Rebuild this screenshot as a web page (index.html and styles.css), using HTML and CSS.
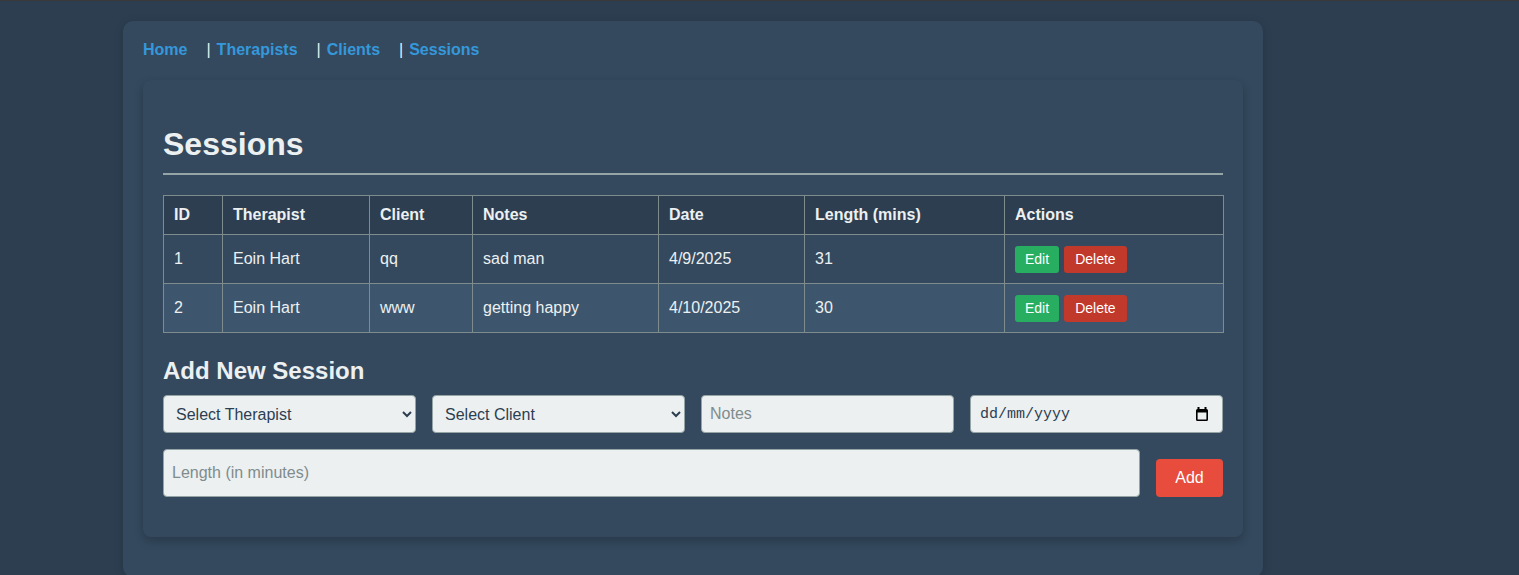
FILE: index.html
```html
<!DOCTYPE html>
<html lang="en">
<head>
<meta charset="utf-8">
<title>Sessions</title>
<link rel="stylesheet" href="styles.css">
</head>
<body>
<div class="container">
  <nav class="nav">
    <a href="#">Home</a><span class="sep">|</span><a href="#">Therapists</a><span class="sep">|</span><a href="#">Clients</a><span class="sep">|</span><a href="#">Sessions</a>
  </nav>
  <section class="card">
    <h2 class="title">Sessions</h2>
    <table class="table">
      <thead>
        <tr>
          <th class="c-id">ID</th>
          <th class="c-ther">Therapist</th>
          <th class="c-client">Client</th>
          <th class="c-notes">Notes</th>
          <th class="c-date">Date</th>
          <th class="c-len">Length (mins)</th>
          <th class="c-act">Actions</th>
        </tr>
      </thead>
      <tbody>
        <tr>
          <td>1</td><td>Eoin Hart</td><td>qq</td><td>sad man</td><td>4/9/2025</td><td>31</td>
          <td><button class="btn edit">Edit</button><button class="btn delete">Delete</button></td>
        </tr>
        <tr class="alt">
          <td>2</td><td>Eoin Hart</td><td>www</td><td>getting happy</td><td>4/10/2025</td><td>30</td>
          <td><button class="btn edit">Edit</button><button class="btn delete">Delete</button></td>
        </tr>
      </tbody>
    </table>
    <h3 class="subtitle">Add New Session</h3>
    <form class="form">
      <div class="row">
        <select class="field"><option>Select Therapist</option></select>
        <select class="field"><option>Select Client</option></select>
        <input class="field" type="text" placeholder="Notes">
        <label class="field date">
          <input class="date-input" type="text" placeholder="dd/mm/yyyy">
          <svg class="cal" width="14" height="14" viewBox="0 0 14 14" aria-hidden="true">
            <rect x="2.5" y="0" width="2" height="3" fill="#000"/>
            <rect x="9.5" y="0" width="2" height="3" fill="#000"/>
            <path d="M1 3.5 Q1 2 2.5 2 H11.5 Q13 2 13 3.5 V12.5 Q13 14 11.5 14 H2.5 Q1 14 1 12.5 Z M2.6 5.6 V12.4 H11.4 V5.6 Z" fill="#000" fill-rule="evenodd"/>
          </svg>
        </label>
      </div>
      <div class="row bottom">
        <input class="field length" type="number" placeholder="Length (in minutes)">
        <button type="button" class="add">Add</button>
      </div>
    </form>
  </section>
</div>
</body>
</html>
```
FILE: styles.css
```css
html, body {
  margin: 0;
  padding: 0;
}
body {
  background: #2c3e50;
  border-top: 1px solid #3a3a3a;
  font-family: "Liberation Sans", Arial, sans-serif;
  color: #ecf0f1;
  overflow: hidden;
  height: 574px;
}
.container {
  width: 1100px;
  margin: 20px 0 0 123px;
  padding: 20px 20px 20px;
  background: #34495e;
  border-radius: 10px;
  box-shadow: 0 2px 10px rgba(0,0,0,0.15);
}
.nav {
  display: flex;
  align-items: baseline;
  font-size: 16px;
  line-height: 18px;
  height: 18px;
}
.nav a {
  color: #3498db;
  font-weight: bold;
  text-decoration: none;
  margin-right: 19px;
}
.nav .sep {
  color: #ecf0f1;
  margin-right: 6px;
}
.card {
  margin-top: 21px;
  margin-bottom: 20px;
  background: #34495e;
  border-radius: 8px;
  padding: 20px;
  box-shadow: 0 4px 10px rgba(0,0,0,0.22);
}
.title {
  font-size: 32px;
  margin: 26px 0 20px;
  padding-bottom: 10px;
  border-bottom: 2px solid #95a5a6;
  line-height: 37px;
}
.table {
  width: 1060px;
  border-collapse: collapse;
  table-layout: fixed;
  font-size: 16px;
}
.table th, .table td {
  box-sizing: border-box;
  border: 1px solid #7f8c8d;
  padding: 10px;
  text-align: left;
  vertical-align: middle;
  line-height: 18px;
}
.table th {
  background: #2c3e50;
  font-weight: bold;
}
.table td {
  height: 49px;
  background: #34495e;
}
.table tr.alt td {
  background: #3d566e;
}
.c-id { width: 59px; }
.c-ther { width: 147px; }
.c-client { width: 103px; }
.c-notes { width: 186px; }
.c-date { width: 146px; }
.c-len { width: 200px; }
.c-act { width: 219px; }
.btn {
  font-family: "Liberation Sans", Arial, sans-serif;
  font-size: 14px;
  line-height: 17px;
  color: #fff;
  border: none;
  border-radius: 3px;
  padding: 5px 10px;
  margin-right: 5px;
  vertical-align: middle;
}
.btn.edit { background: #27ae60; }
.btn.delete { background: #c0392b; padding: 5px 11px; }
.subtitle {
  font-size: 24px;
  margin: 24px 0 11px;
  line-height: 27px;
}
.form {
  display: flex;
  flex-direction: column;
  gap: 16px;
  margin-bottom: 20px;
}
.row {
  display: flex;
  gap: 16px;
}
.row.bottom {
  align-items: flex-end;
}
.field {
  flex: 1 1 0;
  min-width: 0;
  height: 38px;
  box-sizing: border-box;
  background: #ecf0f1;
  border: 1px solid #95a5a6;
  border-radius: 4px;
  padding: 8px;
  font-family: "Liberation Sans", Arial, sans-serif;
  font-size: 16px;
  color: #2c3e50;
}
.field::placeholder {
  color: #7f8c8d;
}
.field.date {
  display: flex;
  align-items: center;
  padding: 0 8px;
}
.date-input {
  flex: 1;
  min-width: 0;
  width: 0;
  margin-left: 1px;
  border: none;
  background: transparent;
  padding: 0;
  outline: none;
  font-family: "Liberation Mono", "DejaVu Sans Mono", monospace;
  font-size: 15px;
  color: #2c3e50;
}
.date-input::placeholder {
  color: #2c3e50;
}
.cal {
  flex: none;
  display: block;
  margin-right: 5px;
}
.field.length {
  height: 48px;
  padding: 12px 8px;
}
.add {
  flex: none;
  width: 67px;
  height: 38px;
  background: #e74c3c;
  color: #fff;
  border: none;
  border-radius: 4px;
  font-family: "Liberation Sans", Arial, sans-serif;
  font-size: 16px;
}
```
